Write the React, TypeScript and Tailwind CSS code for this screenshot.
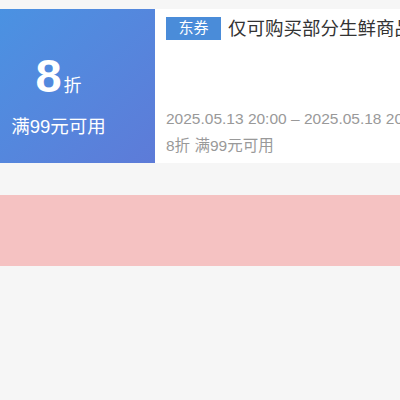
export default function App() {
  return (
    <div
      className="h-[400px] w-[400px] overflow-hidden bg-[#f6f6f6] pt-[9px]"
      style={{ fontFamily: '"Liberation Sans", "Noto Sans CJK SC", sans-serif' }}
    >
      <div className="flex h-[154px] bg-white">
        <div className="flex w-[155px] shrink-0 flex-col items-center bg-gradient-to-br from-[#4a92e2] to-[#5d7bd8] pr-[38px] pt-[43px] text-white">
          <div className="flex items-baseline">
            <span className="text-[47px] font-bold leading-[48px]">8</span>
            <span className="ml-[2px] text-[18px]">折</span>
          </div>
          <div className="mt-[16px] whitespace-nowrap text-[18.5px] leading-[22px]">满99元可用</div>
        </div>
        <div className="flex min-w-0 flex-1 flex-col overflow-hidden whitespace-nowrap pl-[11px] pt-[8px]">
          <div className="flex items-center">
            <span className="flex h-[23px] w-[55px] shrink-0 items-center justify-center bg-[#4a8cd9] text-[15px] text-white">
              东券
            </span>
            <span className="ml-[7px] text-[18.5px] leading-[23px] text-[#333]">仅可购买部分生鲜商品</span>
          </div>
          <div className="mt-[69px] text-[15.5px] leading-[20px] text-[#999]">
            2025.05.13 20:00 – 2025.05.18 20:00
          </div>
          <div className="mt-[7px] text-[15.5px] leading-[20px] text-[#999]">8折 满99元可用</div>
        </div>
      </div>
      <div className="mt-[32px] h-[71px] bg-[#f5c2c2]" />
    </div>
  );
}
